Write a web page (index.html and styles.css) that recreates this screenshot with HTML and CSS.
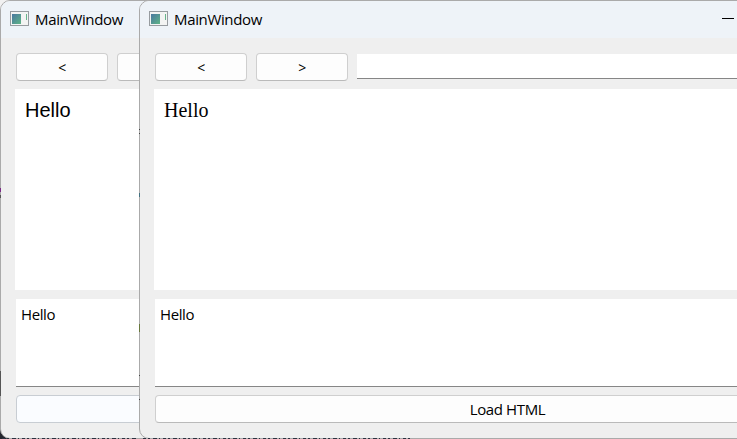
FILE: index.html
```html
<!DOCTYPE html>
<html lang="en">
<head>
<meta charset="utf-8">
<title>MainWindow</title>
<link rel="stylesheet" href="styles.css">
</head>
<body>
<main class="desktop">
  <section class="window window-back">
    <header class="titlebar">
      <svg class="app-icon" width="19" height="15" viewBox="0 0 19 15">
        <defs><linearGradient id="screen" x1="0" y1="0" x2="1" y2="1"><stop offset="0" stop-color="#4a78a0"/><stop offset="1" stop-color="#5eb486"/></linearGradient></defs>
        <rect x=".5" y=".5" width="18" height="14" fill="#f3f4f3" stroke="#979ca0"/>
        <rect x="2" y="3" width="9" height="10" fill="url(#screen)"/>
        <path d="M16 3h1v6h-1z" fill="#67b58c"/>
      </svg>
      <span class="title">MainWindow</span>
    </header>
    <div class="toolbar"><button class="button nav">&lt;</button><button class="button nav">&gt;</button><input class="address" aria-label="Address"></div>
    <div class="view view-sans">Hello</div>
    <div class="editor">Hello</div>
    <button class="button load hovered">Load HTML</button>
  </section>
  <section class="window window-front">
    <header class="titlebar">
      <svg class="app-icon" width="19" height="15" viewBox="0 0 19 15">
        <rect x=".5" y=".5" width="18" height="14" fill="#f3f4f3" stroke="#979ca0"/>
        <rect x="2" y="3" width="9" height="10" fill="url(#screen)"/>
        <path d="M16 3h1v6h-1z" fill="#67b58c"/>
      </svg>
      <span class="title">MainWindow</span>
      <svg class="minimize" width="12" height="1" viewBox="0 0 12 1"><path d="M0 0h12v1H0z"/></svg>
    </header>
    <div class="toolbar"><button class="button nav">&lt;</button><button class="button nav">&gt;</button><input class="address" aria-label="Address"></div>
    <div class="view view-serif">Hello</div>
    <div class="editor">Hello</div>
    <button class="button load">Load HTML</button>
  </section>
  <svg class="edge-marks" width="737" height="439" viewBox="0 0 737 439">
    <path d="M2 438.5H138M143 438.5H412" stroke="#2c3140" stroke-dasharray="3 2 2 3 4 2 1 3"/>
    <path d="M.5 188v4" stroke="#7a2a86"/>
    <path d="M.5 195v3M.5 371v25" stroke="#555"/>
    <path d="M139.5 129v1M139.5 133v1M139.5 375v1M139.5 399v1" stroke="#444"/>
    <path d="M139.5 193v4" stroke="#427080"/>
    <path d="M139.5 324v8" stroke="#68783c"/>
  </svg>
</main>
</body>
</html>
```
FILE: styles.css
```css
* { box-sizing: border-box; }
body { margin: 0; overflow: hidden; font-family: "Open Sans", "Noto Sans", sans-serif; font-size: 15px; color: #000; }
.desktop {
  position: relative;
  width: 737px;
  height: 439px;
  overflow: hidden;
  background: linear-gradient(#f1f1f1 0 420px, #24262e 430px);
}
/* The two overlapping windows sit freely on the desktop. */
.window {
  position: absolute;
  top: 0;
  width: 737px;
  height: 439px;
  display: flex;
  flex-direction: column;
  border: 1px solid #aaa;
  border-radius: 10px;
  background: #efefef;
  overflow: hidden;
}
.window-back { left: 0; }
.window-front { left: 139px; }
/* Slivers of the desktop content showing at the window edges. */
.edge-marks { position: absolute; left: 0; top: 0; pointer-events: none; }
.titlebar {
  flex: none;
  height: 37px;
  padding: 0 0 2px 9px;
  display: flex;
  align-items: center;
  background: #eef3f8;
}
.app-icon { flex: none; margin-right: 6px; }
.title { letter-spacing: -.35px; }
.minimize { margin: 0 141px 0 auto; }
.toolbar {
  flex: none;
  display: flex;
  gap: 9px;
  height: 28px;
  margin: 15px 15px 0;
}
.button {
  flex: none;
  height: 28px;
  padding: 0;
  border: 1px solid #cfcfcf;
  border-bottom-color: #bababa;
  border-radius: 4px;
  background: #fdfdfd;
  color: #000;
  font: inherit;
  letter-spacing: -.38px;
}
.nav { width: 92px; font-size: 14px; }
.address {
  flex: 1;
  min-width: 0;
  height: 25px;
  margin-top: 1px;
  padding: 0 4px;
  border: 0;
  border-bottom: 1px solid #868686;
  background: #fff;
  font: inherit;
}
.view {
  flex: none;
  height: 201px;
  margin: 8px 14px 0;
  padding: 10px 10px;
  background: #fff;
  font-size: 20px;
  line-height: 23px;
}
.view-sans { font-family: "Liberation Sans", sans-serif; }
.view-serif { font-family: "Liberation Serif", serif; }
.editor {
  flex: none;
  height: 88px;
  margin: 9px 15px 8px;
  padding: 5px 5px;
  border-bottom: 1px solid #868686;
  background: #fff;
  line-height: 20px;
  letter-spacing: -.4px;
}
.load { margin: 0 15px; }
.hovered { background: #fafcff; border-color: #c8cdd3; }
```
